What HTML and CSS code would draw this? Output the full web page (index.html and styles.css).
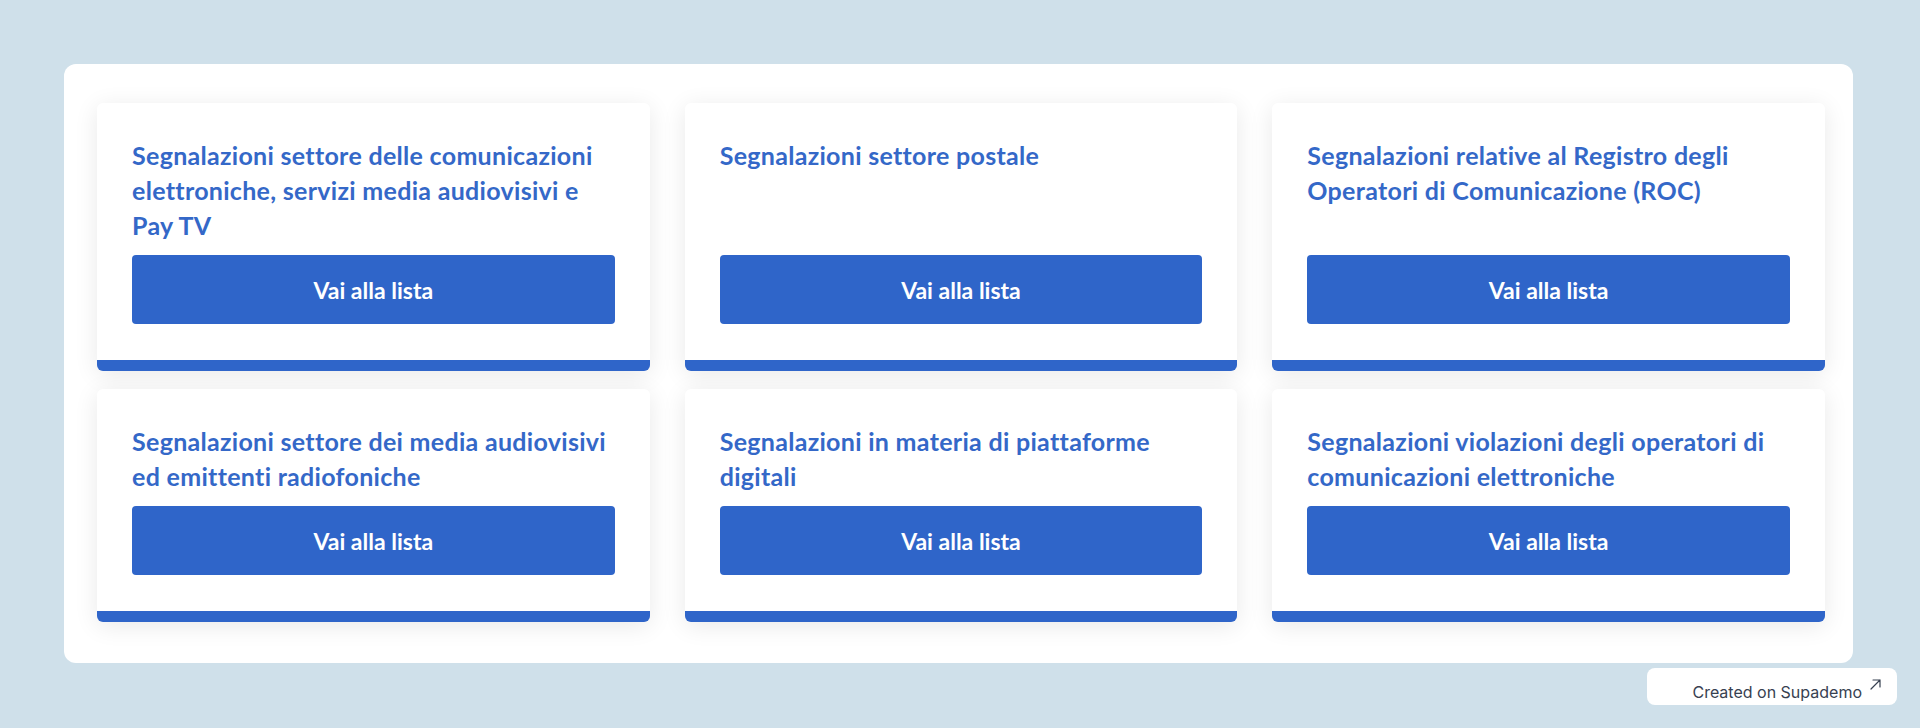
FILE: index.html
```html
<!DOCTYPE html>
<html lang="it">
<head>
<meta charset="utf-8">
<title>Segnalazioni</title>
<link rel="stylesheet" href="styles.css">
</head>
<body>
<main class="panel">
  <div class="grid">
    <section class="card">
      <h3 class="card-title">Segnalazioni settore delle comunicazioni elettroniche, servizi media audiovisivi e Pay TV</h3>
      <a class="btn" href="#">Vai alla lista</a>
    </section>
    <section class="card">
      <h3 class="card-title">Segnalazioni settore postale</h3>
      <a class="btn" href="#">Vai alla lista</a>
    </section>
    <section class="card">
      <h3 class="card-title">Segnalazioni relative al Registro degli Operatori di Comunicazione (ROC)</h3>
      <a class="btn" href="#">Vai alla lista</a>
    </section>
    <section class="card">
      <h3 class="card-title">Segnalazioni settore dei media audiovisivi ed emittenti radiofoniche</h3>
      <a class="btn" href="#">Vai alla lista</a>
    </section>
    <section class="card">
      <h3 class="card-title">Segnalazioni in materia di piattaforme digitali</h3>
      <a class="btn" href="#">Vai alla lista</a>
    </section>
    <section class="card">
      <h3 class="card-title">Segnalazioni violazioni degli operatori di comunicazioni elettroniche</h3>
      <a class="btn" href="#">Vai alla lista</a>
    </section>
  </div>
</main>
<a class="badge" href="#">
  <span class="badge-text">Created on Supademo</span>
  <svg class="badge-arrow" width="11" height="11" viewBox="0 0 11 11" fill="none" stroke="#374151" stroke-width="1.2" stroke-linecap="round" stroke-linejoin="round"><path d="M1 10 L10 1 M3 1 H10 V8"/></svg>
</a>
</body>
</html>
```
FILE: styles.css
```css
html, body {
  margin: 0;
  padding: 0;
}
body {
  background: #cfe0ea;
  width: 1920px;
  height: 728px;
  overflow: hidden;
  position: relative;
  font-family: Lato, "Noto Sans", sans-serif;
}
.panel {
  margin: 64px 0 0 64px;
  width: 1789px;
  box-sizing: border-box;
  padding: 39px 28px 41px 33px;
  background: #ffffff;
  border-radius: 12px;
}
.grid {
  display: grid;
  grid-template-columns: repeat(3, 1fr);
  column-gap: 35px;
  row-gap: 18px;
}
.card {
  display: flex;
  flex-direction: column;
  background: #ffffff;
  border-radius: 6px;
  border-bottom: 11px solid #2f65c9;
  box-shadow: 0 4px 24px rgba(0, 0, 0, 0.09);
  padding: 35px 35px 36px;
}
.card-title {
  flex: 1;
  margin: 0 0 12px;
  font-size: 25px;
  line-height: 35px;
  font-weight: 700;
  color: #3468c8;
  letter-spacing: 0.3px;
}
.btn {
  display: flex;
  align-items: center;
  justify-content: center;
  height: 69px;
  background: #2f65c9;
  border-radius: 4px;
  color: #ffffff;
  font-size: 23px;
  font-weight: 700;
  text-decoration: none;
}
.badge {
  position: absolute;
  left: 1647px;
  top: 668px;
  width: 250px;
  height: 37px;
  box-sizing: border-box;
  background: #ffffff;
  border-radius: 8px;
  display: flex;
  align-items: flex-end;
  justify-content: flex-end;
  padding: 0 16px 3px 0;
  text-decoration: none;
  font-family: Inter, "Noto Sans", sans-serif;
}
.badge-text {
  font-size: 16px;
  color: #374151;
  line-height: 20px;
}
.badge-arrow {
  margin: 0 0 12px 8px;
}
```
